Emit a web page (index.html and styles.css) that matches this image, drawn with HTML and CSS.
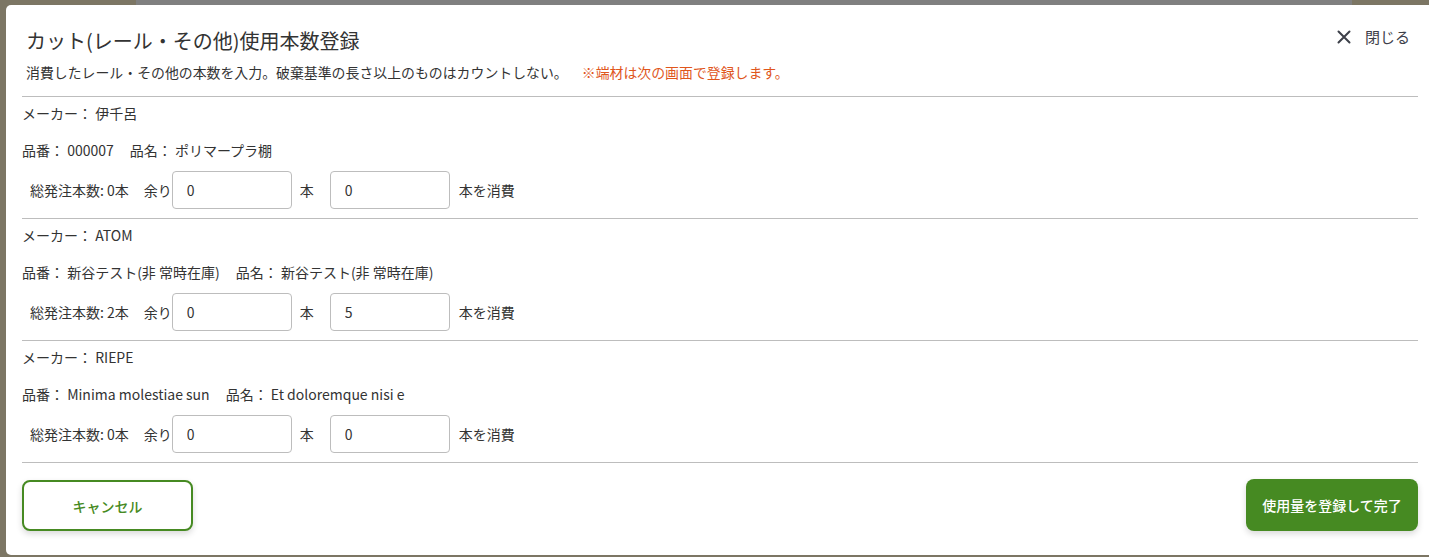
FILE: index.html
```html
<!DOCTYPE html>
<html lang="ja">
<head>
  <meta charset="UTF-8">
  <title>カット使用本数登録</title>
  <link rel="stylesheet" href="styles.css">
</head>
<body>
  <div class="backdrop">
    <div class="modal">
      <div class="modal-header">
        <div class="head-text">
          <h2>カット(レール・その他)使用本数登録</h2>
          <p class="lead">消費したレール・その他の本数を入力。破棄基準の長さ以上のものはカウントしない。<span class="note">※端材は次の画面で登録します。</span></p>
        </div>
        <button class="close-btn">
          <svg width="14" height="14" viewBox="0 0 14 14"><path d="M1.5 1.5L12.5 12.5M12.5 1.5L1.5 12.5" stroke="#3d4049" stroke-width="2" stroke-linecap="round"/></svg>
          閉じる
        </button>
      </div>

      <div class="item">
        <div class="line">メーカー： 伊千呂</div>
        <div class="line">品番： 000007<span class="sep"></span>品名： ポリマープラ棚</div>
        <div class="qty-row">
          <span class="total">総発注本数: 0本</span>
          <span>余り</span>
          <input type="text" value="0">
          <span class="unit">本</span>
          <input type="text" value="0">
          <span class="unit-end">本を消費</span>
        </div>
      </div>

      <div class="item">
        <div class="line">メーカー： ATOM</div>
        <div class="line">品番： 新谷テスト(非 常時在庫)<span class="sep"></span>品名： 新谷テスト(非 常時在庫)</div>
        <div class="qty-row">
          <span class="total">総発注本数: 2本</span>
          <span>余り</span>
          <input type="text" value="0">
          <span class="unit">本</span>
          <input type="text" value="5">
          <span class="unit-end">本を消費</span>
        </div>
      </div>

      <div class="item">
        <div class="line">メーカー： RIEPE</div>
        <div class="line">品番： Minima molestiae sun<span class="sep"></span>品名： Et doloremque nisi e</div>
        <div class="qty-row">
          <span class="total">総発注本数: 0本</span>
          <span>余り</span>
          <input type="text" value="0">
          <span class="unit">本</span>
          <input type="text" value="0">
          <span class="unit-end">本を消費</span>
        </div>
      </div>

      <div class="modal-footer">
        <button class="btn-cancel">キャンセル</button>
        <button class="btn-done">使用量を登録して完了</button>
      </div>
    </div>
  </div>
</body>
</html>
```

FILE: styles.css
```css
body {
  margin: 0;
  overflow: hidden;
  font-family: "Noto Sans CJK JP", "Noto Sans", sans-serif;
  color: #333;
  background: #7c7664;
}

.backdrop {
  height: 557px;
  padding: 5px 0 0 6px;
  box-sizing: border-box;
  background: linear-gradient(to right, #7c7664 136px, #808080 136px, #808080 1352px, #7c7664 1352px) top / 100% 5px no-repeat;
}

.modal {
  width: 1428px;
  height: 550px;
  background: #fff;
  border-radius: 5px;
  padding: 0 16px;
  box-sizing: border-box;
}

.modal-header {
  display: flex;
  justify-content: space-between;
  align-items: flex-start;
  padding: 21px 8px 15px 4px;
  border-bottom: 1px solid #bdbdbd;
}

h2 {
  margin: 0;
  font-size: 20px;
  font-weight: 400;
  line-height: 30px;
  color: #333;
}

.lead {
  margin: 7px 0 0;
  font-size: 13.9px;
  line-height: 18px;
  color: #333;
}

.note {
  color: #e0561c;
  margin-left: 14px;
}

.close-btn {
  display: flex;
  align-items: center;
  gap: 14px;
  border: none;
  background: none;
  padding: 0;
  margin-top: 0;
  font-family: inherit;
  font-size: 15px;
  color: #3d4049;
  cursor: pointer;
}

.item {
  padding: 6px 0 9px;
  border-bottom: 1px solid #bdbdbd;
  font-size: 14px;
}

.line {
  line-height: 20px;
  margin-bottom: 17px;
}

.item .line + .line {
  margin-bottom: 11px;
}

.sep {
  display: inline-block;
  width: 16px;
}

.qty-row {
  display: flex;
  align-items: center;
  padding-left: 8px;
  height: 38px;
}

.total {
  margin-right: 15px;
}

.qty-row input {
  width: 120px;
  height: 38px;
  box-sizing: border-box;
  border: 1px solid #bdbdbd;
  border-radius: 4px;
  padding: 0 14px;
  font-family: inherit;
  font-size: 14px;
  color: #333;
}

.unit {
  margin: 0 16px 0 8px;
}

.unit-end {
  margin-left: 9px;
}

.modal-footer {
  display: flex;
  justify-content: space-between;
  padding-top: 16px;
}

.btn-cancel, .btn-done {
  font-family: inherit;
  font-size: 14px;
  font-weight: 500;
  border-radius: 8px;
  cursor: pointer;
  box-shadow: 0 3px 6px rgba(0, 0, 0, 0.15);
}

.btn-cancel {
  width: 171px;
  height: 51px;
  margin-top: 1px;
  background: #fff;
  color: #468a22;
  border: 2px solid #468a22;
}

.btn-done {
  width: 172px;
  height: 52px;
  background: #468a22;
  color: #fff;
  border: none;
}
```
